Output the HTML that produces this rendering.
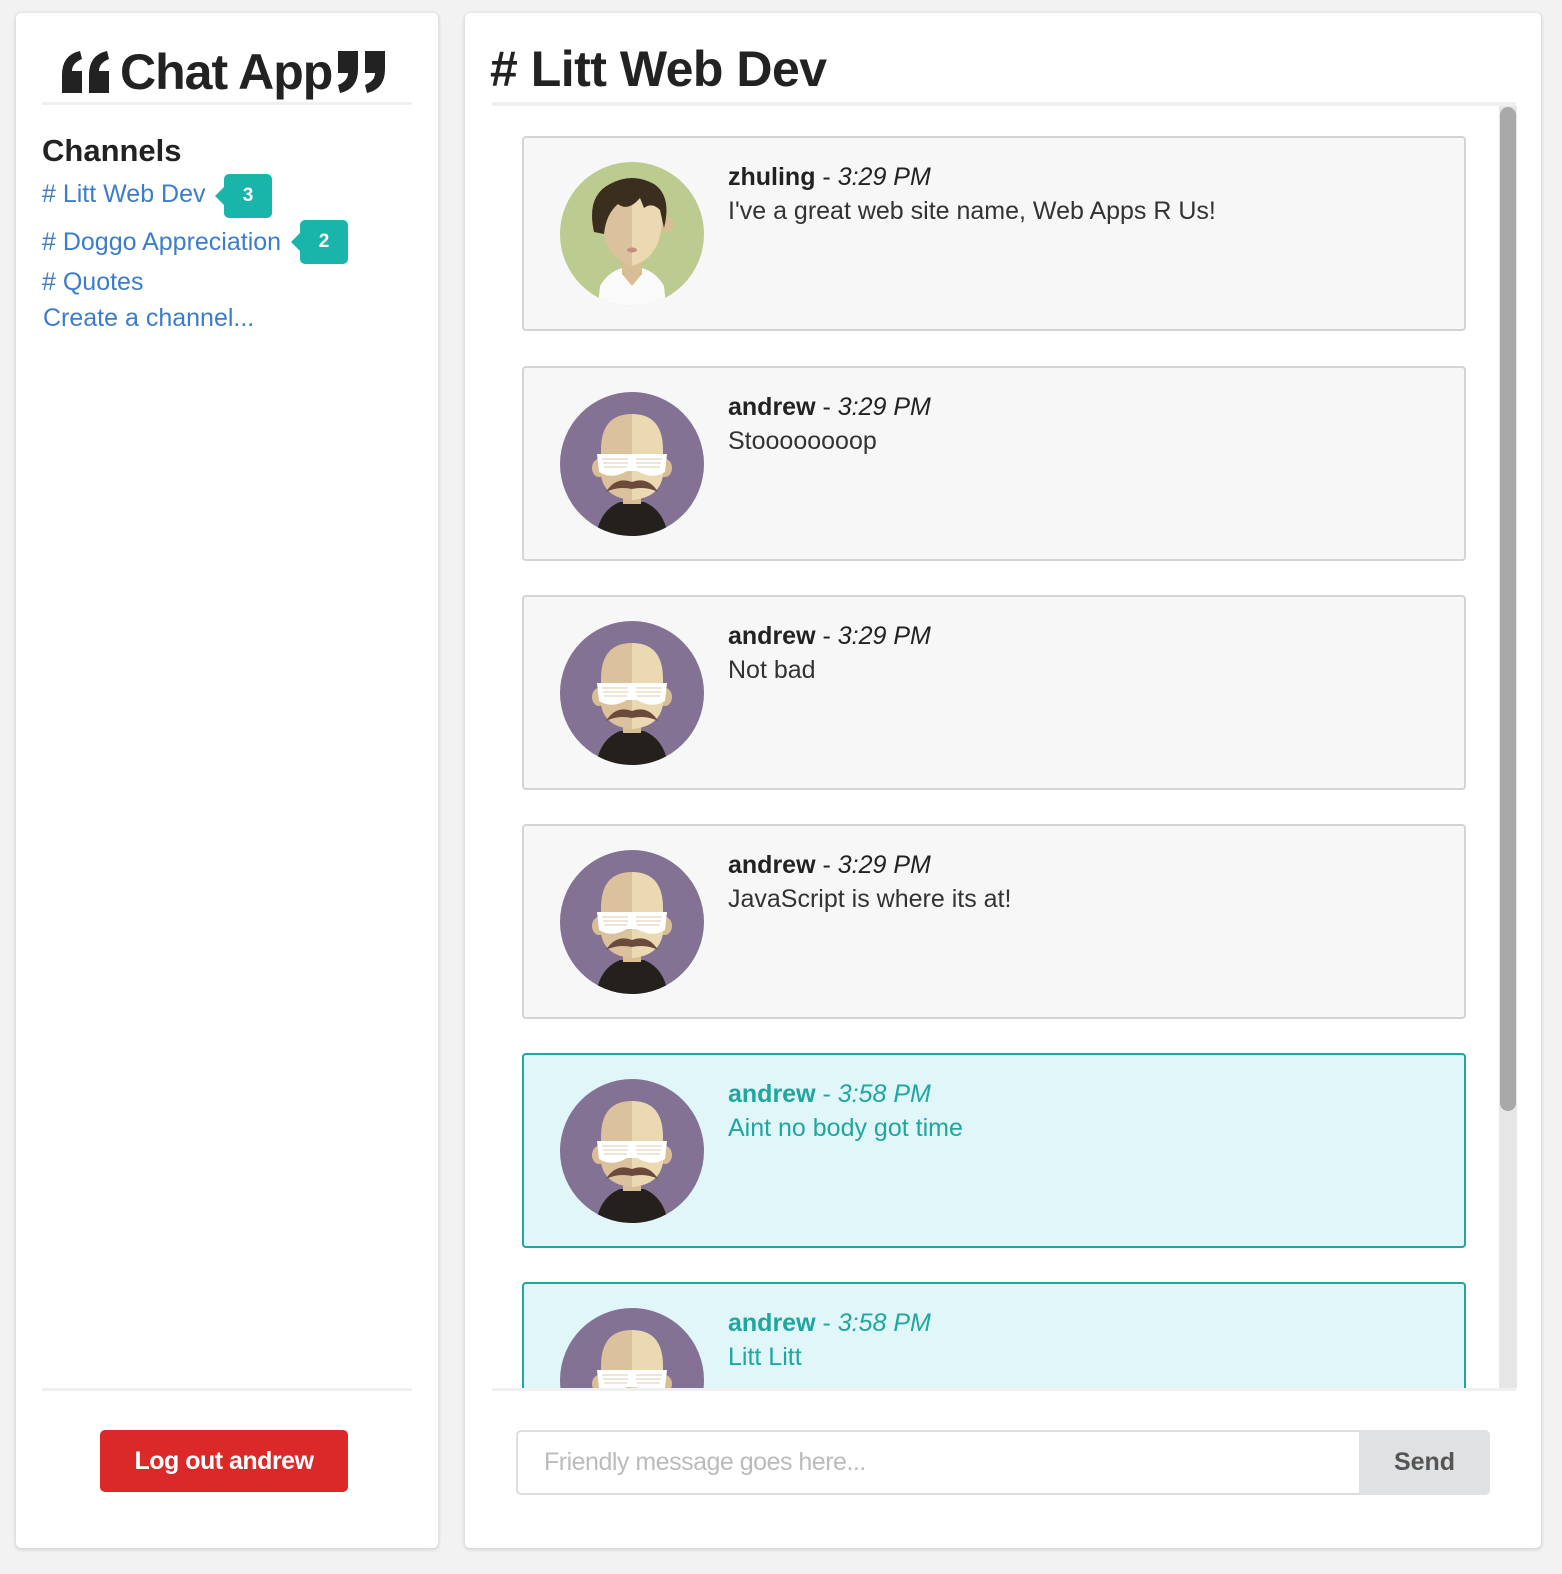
<!DOCTYPE html>
<html><head><meta charset="utf-8"><style>
*{box-sizing:border-box;margin:0;padding:0}
body{width:1562px;height:1574px;background:#f2f2f2;font-family:"Liberation Sans",sans-serif;position:relative;overflow:hidden}
.card{position:absolute;background:#fff;border-radius:5px;box-shadow:0 1px 3px 1px rgba(0,0,0,.12)}
.abs{position:absolute}
.link{position:absolute;color:#3d7cc9;font-size:25px;white-space:nowrap}
.badge{position:absolute;background:#19b5ab;color:#fff;font-weight:bold;font-size:19px;border-radius:5px;width:48px;height:44px;text-align:center;line-height:44px}
.badge:before{content:"";position:absolute;left:-9px;top:13px;border-top:9px solid transparent;border-bottom:9px solid transparent;border-right:9px solid #19b5ab}
.msg{position:absolute;left:522px;width:944px;height:195px;background:#f7f7f7;border:2px solid #d4d4d5;border-radius:4px;overflow:hidden}
.msg.hl{background:#e0f6f8;border-color:#1fa6a0}
.msg svg{position:absolute;left:36px;top:24px}
.msg .n{position:absolute;left:204px;top:25px;font-size:25px;color:#222}
.msg .n b{font-weight:bold}
.msg .t{position:absolute;left:204px;top:59px;font-size:25px;color:#333}
.msg.hl .n,.msg.hl .t{color:#1fa6a0}
</style></head><body>
<svg width="0" height="0" style="position:absolute">
<defs>
<clipPath id="cc"><circle cx="72" cy="72" r="72"/></clipPath>
<g id="andrew">
<circle cx="72" cy="72" r="72" fill="#837293"/>
<g clip-path="url(#cc)">
<path d="M36 144 Q40 118 60 110 L84 110 Q104 118 108 144Z" fill="#24211c"/>
<rect x="63" y="98" width="18" height="14" fill="#d9bd95"/>
<ellipse cx="39" cy="76" rx="7" ry="9" fill="#d9bd95"/>
<ellipse cx="105" cy="76" rx="7" ry="9" fill="#d9bd95"/>
<path d="M72 22 Q41 22 41 58 L41 84 Q45 106 72 108Z" fill="#dcc29c"/>
<path d="M72 22 Q103 22 103 58 L103 84 Q99 106 72 108Z" fill="#ebd9b2"/>
<path d="M37 62 L107 62 L105 80 Q92 88 77 79 L67 79 Q52 88 39 80Z" fill="#fff"/>
<g stroke="#e8dccb" stroke-width="1.5"><line x1="42" y1="67" x2="68" y2="67"/><line x1="76" y1="67" x2="102" y2="67"/><line x1="43" y1="71" x2="68" y2="71"/><line x1="76" y1="71" x2="101" y2="71"/><line x1="44" y1="75" x2="67" y2="75"/><line x1="77" y1="75" x2="100" y2="75"/></g>
<path d="M46 100 Q56 84 72 90 Q88 84 98 100 Q86 94 72 97 Q58 94 46 100Z" fill="#6b4a3c"/>
</g></g>
</defs></svg>

<div class="card" style="left:16px;top:13px;width:422px;height:1535px">
<svg class="abs" style="left:44px;top:36px" width="52" height="46" viewBox="0 0 52 46"><path d="M2 44 L2 26 Q2 6 20 2 L22 10 Q12 14 12 22 L22 22 L22 44Z M29 44 L29 26 Q29 6 47 2 L49 10 Q39 14 39 22 L49 22 L49 44Z" fill="#222"/></svg>
<div class="abs" style="left:104px;top:30px;font-size:50px;font-weight:bold;color:#222;letter-spacing:-1px">Chat App</div>
<svg class="abs" style="left:318px;top:36px" width="54" height="46" viewBox="0 0 52 46"><path d="M2 2 L2 20 Q2 40 20 44 L22 36 Q12 32 12 24 L22 24 L22 2Z M29 2 L29 20 Q29 40 47 44 L49 36 Q39 32 39 24 L49 24 L49 2Z" fill="#222" transform="translate(52,0) scale(-1,1)"/></svg>
<div class="abs" style="left:26px;top:89px;width:370px;height:3px;background:#f0f0f0"></div>
<div class="abs" style="left:26px;top:120px;font-size:31px;font-weight:bold;color:#222">Channels</div>
<div class="link" style="left:26px;top:167px"># Litt Web Dev</div>
<div class="badge" style="left:208px;top:161px">3</div>
<div class="link" style="left:26px;top:215px"># Doggo Appreciation</div>
<div class="badge" style="left:284px;top:207px">2</div>
<div class="link" style="left:26px;top:255px"># Quotes</div>
<div class="link" style="left:27px;top:291px">Create a channel...</div>
<div class="abs" style="left:26px;top:1375px;width:370px;height:3px;background:#f0f0f0"></div>
<div class="abs" style="left:84px;top:1417px;width:248px;height:62px;background:#db2828;border-radius:5px;color:#fff;font-weight:bold;font-size:25px;text-align:center;line-height:62px;letter-spacing:-.5px">Log out andrew</div>
</div>

<div class="card" style="left:465px;top:13px;width:1076px;height:1535px"></div>
<div class="abs" style="left:490px;top:40px;font-size:50px;font-weight:bold;color:#222;letter-spacing:-.5px"># Litt Web Dev</div>
<div class="abs" style="left:492px;top:102px;width:1024px;height:4px;background:#f0f0f0"></div>
<div class="abs" style="left:1499px;top:106px;width:18px;height:1282px;background:#e6e6e6"></div>
<div class="abs" style="left:1500px;top:107px;width:16px;height:1004px;background:#a9a9a9;border-radius:8px"></div>

<div class="abs" style="left:492px;top:106px;width:1005px;height:1282px;overflow:hidden">
<div style="position:absolute;left:-492px;top:-106px;width:1562px;height:1600px">
<div class="msg" style="top:136px">
<svg width="144" height="144" viewBox="0 0 144 144">
<circle cx="72" cy="72" r="72" fill="#bccb8f"/>
<g clip-path="url(#cc)">
<path d="M38 144 L40 124 Q48 110 62 106 L82 106 Q96 110 104 124 L106 144Z" fill="#fafafa"/>
<path d="M62 100 L82 100 L82 112 L72 124 L62 112Z" fill="#d9bd95"/>
<ellipse cx="37" cy="62" rx="6" ry="8" fill="#d9bd95"/><ellipse cx="107" cy="62" rx="6" ry="8" fill="#d9bd95"/>
<path d="M72 26 Q42 26 42 60 Q44 96 72 104Z" fill="#dcc29c"/>
<path d="M72 26 Q102 26 102 60 Q100 96 72 104Z" fill="#ebd9b2"/>
<path d="M34 70 Q26 34 50 22 Q72 10 94 22 Q112 34 104 66 L100 48 Q92 40 84 46 L80 36 Q68 50 58 42 Q46 52 44 72Z" fill="#3a2e1f"/>
<ellipse cx="72" cy="88" rx="5" ry="2.5" fill="#c98a87"/>
</g></svg>
<div class="n"><b>zhuling</b> - <i>3:29 PM</i></div>
<div class="t">I've a great web site name, Web Apps R Us!</div>
</div>
<div class="msg" style="top:366px"><svg width="144" height="144"><use href="#andrew"/></svg><div class="n"><b>andrew</b> - <i>3:29 PM</i></div><div class="t">Stoooooooop</div></div>
<div class="msg" style="top:595px"><svg width="144" height="144"><use href="#andrew"/></svg><div class="n"><b>andrew</b> - <i>3:29 PM</i></div><div class="t">Not bad</div></div>
<div class="msg" style="top:824px"><svg width="144" height="144"><use href="#andrew"/></svg><div class="n"><b>andrew</b> - <i>3:29 PM</i></div><div class="t">JavaScript is where its at!</div></div>
<div class="msg hl" style="top:1053px"><svg width="144" height="144"><use href="#andrew"/></svg><div class="n"><b>andrew</b> - <i>3:58 PM</i></div><div class="t">Aint no body got time</div></div>
<div class="msg hl" style="top:1282px"><svg width="144" height="144"><use href="#andrew"/></svg><div class="n"><b>andrew</b> - <i>3:58 PM</i></div><div class="t">Litt Litt</div></div>
</div></div>
<div class="abs" style="left:492px;top:1388px;width:1024px;height:3px;background:#f0f0f0"></div>

<div class="abs" style="left:516px;top:1430px;width:843px;height:65px;border:2px solid #ddd;border-right:none;border-radius:5px 0 0 5px;background:#fff;color:#bbb;font-size:25px;line-height:61px;padding-left:26px;letter-spacing:-.5px">Friendly message goes here...</div>
<div class="abs" style="left:1359px;top:1430px;width:131px;height:65px;background:#e0e1e2;border-radius:0 5px 5px 0;color:#555;font-weight:bold;font-size:25px;text-align:center;line-height:65px">Send</div>
</body></html>
